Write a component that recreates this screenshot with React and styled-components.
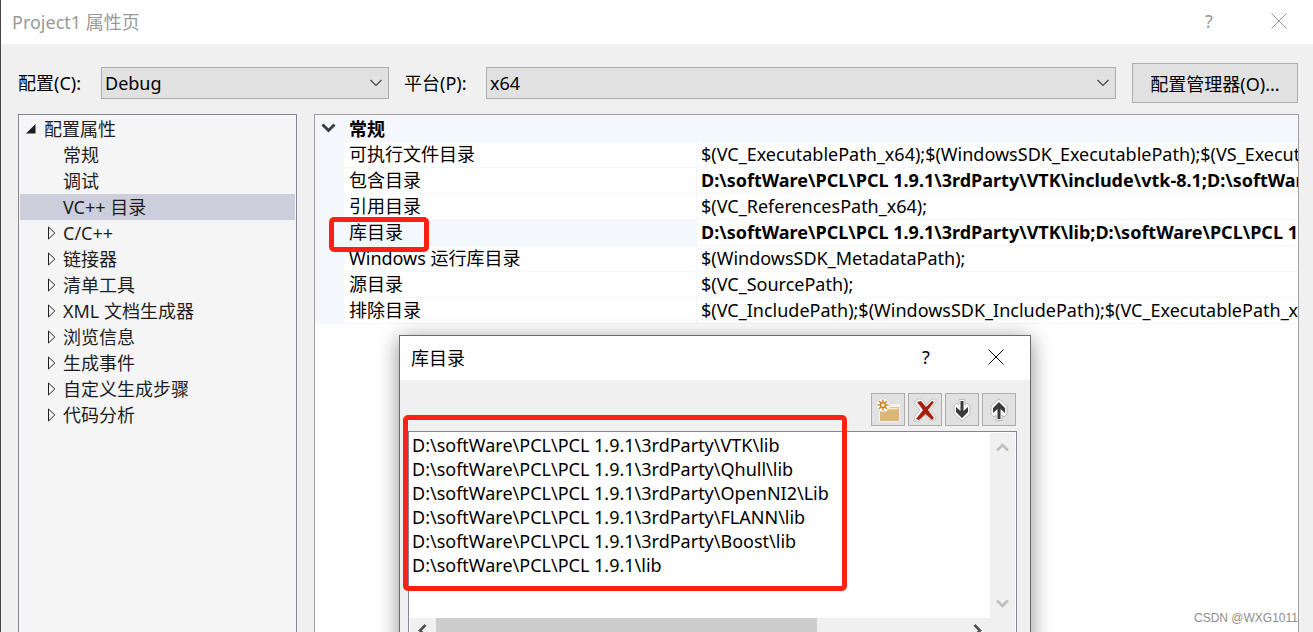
import React from 'react';
import styled, { createGlobalStyle } from 'styled-components';

const GlobalStyle = createGlobalStyle`
  * {
    box-sizing: border-box;
  }

  body {
    margin: 0;
    overflow: hidden;
    background: #f0f0f0;
    color: #000;
    font-family: 'Noto Sans', 'Noto Sans CJK SC', sans-serif;
    font-size: 18px;
  }

  button,
  select {
    font: inherit;
    color: inherit;
  }

  ul {
    margin: 0;
    padding: 0;
    list-style: none;
  }
`;

const Window = styled.div`
  position: relative;
  display: flex;
  flex-direction: column;
  height: 100vh;
  overflow: hidden;
  border-left: 1px solid #47484c;
`;

const TitleBar = styled.header`
  display: flex;
  flex: none;
  align-items: center;
  justify-content: space-between;
  height: 44px;
  padding: 0 11px 2px;
  background: #fff;
  color: ${({ $inactive }) => ($inactive ? '#999' : '#000')};
`;

const Title = styled.h1`
  margin: 0;
  font-size: 18px;
  font-weight: 400;
`;

const WindowButtons = styled.div`
  display: flex;
`;

const WindowButton = styled.button`
  display: flex;
  align-items: center;
  justify-content: center;
  width: 46px;
  height: 42px;
  margin-left: 24px;
  padding: 0;
  border: 0;
  background: none;
`;

const Toolbar = styled.div`
  display: flex;
  flex: none;
  align-items: center;
  height: 40px;
  margin: 19px 15px 11px 17px;
`;

const Label = styled.label`
  width: ${({ $width }) => $width}px;
  padding-bottom: 2px;
  white-space: nowrap;
`;

const SelectBox = styled.div`
  position: relative;
  flex: ${({ $width }) => ($width ? `0 0 ${$width}px` : '1')};
  margin-right: 15px;

  svg {
    position: absolute;
    top: 12px;
    right: 7px;
    pointer-events: none;
  }
`;

const Select = styled.select`
  display: block;
  width: 100%;
  height: 32px;
  padding: 0 3px;
  border: 1px solid #adadad;
  border-radius: 0;
  background: #e1e1e1;
  appearance: none;
`;

const PushButton = styled.button`
  width: 166px;
  height: 40px;
  margin-left: 1px;
  padding: 0;
  border: 1px solid #adadad;
  background: #e1e1e1;
  white-space: nowrap;
`;

const Panels = styled.main`
  display: flex;
  flex: 1;
  gap: 17px;
  min-height: 0;
  padding: 0 14px 0 17px;
`;

const Tree = styled.ul`
  flex: 0 0 279px;
  padding: 1px;
  border: 1px solid #828790;
  border-bottom: 0;
  background: #f5f5f5;
  color: #1e1e1e;
`;

const TreeItem = styled.li`
  display: flex;
  align-items: center;
  height: 26px;
  padding-left: ${({ $root }) => ($root ? 6 : 24)}px;
  background: ${({ $selected }) => ($selected ? '#cccedb' : 'none')};
  line-height: 26px;
`;

const Twisty = styled.span`
  display: flex;
  width: ${({ $root }) => ($root ? 18 : 19)}px;
  padding-left: ${({ $root }) => ($root ? 0 : 3)}px;
`;

const GridPanel = styled.section`
  flex: 1;
  min-width: 0;
  overflow: hidden;
  border: 1px solid #a0a0a0;
  border-bottom: 0;
  background: #fff;
`;

const Grid = styled.table`
  width: 100%;
  table-layout: fixed;
  border-spacing: 0;
  line-height: 25px;
  white-space: nowrap;
`;

const Gutter = styled.td`
  padding: 0;
  background: #f4f7fc;

  svg {
    display: block;
    margin: 0 0 2px 6px;
  }
`;

const GroupName = styled.th`
  height: 27px;
  padding: 2px 5px 0;
  background: #f4f7fc;
  text-align: left;
`;

const NameCell = styled.th`
  position: relative;
  height: 26px;
  padding: 0 5px;
  border-right: 1px solid #f4f7fc;
  border-bottom: 1px solid #f4f7fc;
  background: ${({ $selected }) => ($selected ? '#f4f7fc' : 'none')};
  font-weight: 400;
  text-align: left;
`;

const ValueCell = styled.td`
  padding: 0 0 0 4px;
  border-bottom: 1px solid #f4f7fc;
  font-weight: ${({ $modified }) => ($modified ? 700 : 400)};
  overflow: hidden;
`;

const Marker = styled.span`
  position: absolute;
  z-index: 1;
  top: ${({ $top }) => $top}px;
  left: ${({ $left }) => $left}px;
  width: ${({ $width }) => $width}px;
  height: ${({ $height }) => $height}px;
  border: 5px solid #ff2014;
  border-radius: 5px;
  pointer-events: none;
`;

const Dialog = styled.section`
  position: absolute;
  top: 335px;
  left: 398px;
  width: 632px;
  border: 1px solid #6b6b6b;
  background: #f0f0f0;
  box-shadow: 0 4px 20px rgba(0, 0, 0, 0.45);
`;

const DialogTools = styled.div`
  display: flex;
  justify-content: flex-end;
  gap: 3px;
  padding: 13px 14px 5px;
`;

const ToolButton = styled.button`
  display: flex;
  align-items: center;
  justify-content: center;
  width: 34px;
  height: 33px;
  padding: 0;
  border: 1px solid #adadad;
  background: #e1e1e1;
`;

const ListBox = styled.div`
  position: relative;
  display: grid;
  grid-template-columns: 1fr 25px;
  grid-template-rows: 185px 26px;
  margin: 0 13px 13px 8px;
  padding: 1px;
  border: 1px solid #828790;
  background: #fff;
`;

const PathList = styled.ul`
  line-height: 24px;
  white-space: nowrap;

  li {
    padding-left: 2px;
  }
`;

const VerticalScroll = styled.div`
  display: flex;
  flex-direction: column;
  align-items: center;
  justify-content: space-between;
  padding: 8px 0;
  background: #f0f0f0;
`;

const HorizontalScroll = styled.div`
  display: grid;
  grid-column: 1 / -1;
  grid-template-columns: 26px 381px 1fr 50px;
  background: #f0f0f0;

  svg {
    margin: 6px 6px 0;
  }
`;

const Thumb = styled.div`
  grid-column: 2;
  background: #cdcdcd;
`;

const ArrowEnd = styled.div`
  grid-column: 4;
`;

const Watermark = styled.span`
  position: absolute;
  right: 15px;
  bottom: 6px;
  color: #8e8e8e;
  font-family: 'Liberation Sans', sans-serif;
  font-size: 12px;
  line-height: 16px;
`;

const CloseIcon = () => (
  <svg width="16" height="16" viewBox="0 0 16 16" aria-hidden="true">
    <path d="M.5.5l15 15M15.5.5l-15 15" stroke="currentColor" fill="none" />
  </svg>
);

const SelectChevron = () => (
  <svg width="12" height="8" viewBox="0 0 12 8" aria-hidden="true">
    <path d="M.5 1l5.500 5.500L11.500 1" stroke="#444" strokeWidth="1.200" fill="none" />
  </svg>
);

const rotations = { up: 0, right: 90, down: 180, left: 270 };

const ScrollArrow = ({ to, color }) => (
  <svg width="13" height="13" viewBox="0 0 13 13" aria-hidden="true">
    <path
      d="M1 9.500L6.500 4L12 9.500"
      transform={`rotate(${rotations[to]} 6.500 6.500)`}
      stroke={color}
      strokeWidth="2.600"
      fill="none"
    />
  </svg>
);

const NewFolderIcon = () => (
  <svg width="26" height="26" viewBox="0 0 26 26" aria-hidden="true">
    <path d="M4 11V25h21V7h-9z" fill="#f6f3ec" />
    <path d="M5 14h7l4-4h8v14H5z" fill="#dcb679" />
    <path d="M14 11.500h9" stroke="#f5ead6" strokeWidth="1.500" />
    <circle cx="8" cy="8" r="7" fill="#f8f8f6" stroke="#c9c9c9" strokeWidth=".6" />
    <path
      d="M8 2.500v11M2.500 8h11M4 4l8 8M12 4l-8 8"
      stroke="#c98a2b"
      strokeWidth="1.500"
    />
    <circle cx="8" cy="8" r="3.200" fill="#c98a2b" />
    <circle cx="8" cy="8" r="1.500" fill="#fff" />
  </svg>
);

const DeleteIcon = () => (
  <svg width="26" height="26" viewBox="0 0 26 26" aria-hidden="true">
    <path
      d="M3 4l3-2h4l4 6 6-6h4v3l-6 8 6 7-1 3-4 1-6-6-6 6H2l1-5 5-6-5-6z"
      fill="#f8f8f8"
      stroke="#c2c2c2"
    />
    <path
      d="M5 5l4-1 5 6 6-6 2 1-6 8 6 8-2 2-6.500-6L7 23l-3-1 7-9z"
      fill="#a81e0c"
    />
  </svg>
);

const MoveIcon = ({ up }) => (
  <svg width="20" height="24" viewBox="0 0 20 24" aria-hidden="true">
    <g transform={up ? 'rotate(180 10 12)' : undefined}>
      <path
        d="M7 1.500h6V7l2-2 3 3v8l-8 7-8-7V8l3-3 2 2z"
        fill="#f8f8f8"
        stroke="#bdbdbd"
      />
      <path
        d="M8.500 3h3v10L16 9v5l-6 6-6-6V9l4.500 4z"
        fill="#3a3a3a"
      />
    </g>
  </svg>
);

const treeItems = [
  { name: '常规' },
  { name: '调试' },
  { name: 'VC++ 目录', selected: true },
  { name: 'C/C++', folder: true },
  { name: '链接器', folder: true },
  { name: '清单工具', folder: true },
  { name: 'XML 文档生成器', folder: true },
  { name: '浏览信息', folder: true },
  { name: '生成事件', folder: true },
  { name: '自定义生成步骤', folder: true },
  { name: '代码分析', folder: true },
];

const properties = [
  {
    name: '可执行文件目录',
    value:
      '$(VC_ExecutablePath_x64);$(WindowsSDK_ExecutablePath);$(VS_ExecutablePath)',
  },
  {
    name: '包含目录',
    value:
      'D:\\softWare\\PCL\\PCL 1.9.1\\3rdParty\\VTK\\include\\vtk-8.1;D:\\softWare\\PCL',
    modified: true,
  },
  { name: '引用目录', value: '$(VC_ReferencesPath_x64);' },
  {
    name: '库目录',
    value:
      'D:\\softWare\\PCL\\PCL 1.9.1\\3rdParty\\VTK\\lib;D:\\softWare\\PCL\\PCL 1.9.1',
    modified: true,
    selected: true,
  },
  { name: 'Windows 运行库目录', value: '$(WindowsSDK_MetadataPath);' },
  { name: '源目录', value: '$(VC_SourcePath);' },
  {
    name: '排除目录',
    value:
      '$(VC_IncludePath);$(WindowsSDK_IncludePath);$(VC_ExecutablePath_x64)',
  },
];

const libraryPaths = [
  'D:\\softWare\\PCL\\PCL 1.9.1\\3rdParty\\VTK\\lib',
  'D:\\softWare\\PCL\\PCL 1.9.1\\3rdParty\\Qhull\\lib',
  'D:\\softWare\\PCL\\PCL 1.9.1\\3rdParty\\OpenNI2\\Lib',
  'D:\\softWare\\PCL\\PCL 1.9.1\\3rdParty\\FLANN\\lib',
  'D:\\softWare\\PCL\\PCL 1.9.1\\3rdParty\\Boost\\lib',
  'D:\\softWare\\PCL\\PCL 1.9.1\\lib',
];

const Caption = ({ title, inactive }) => (
  <TitleBar $inactive={inactive}>
    <Title>{title}</Title>
    <WindowButtons>
      <WindowButton aria-label="帮助">?</WindowButton>
      <WindowButton aria-label="关闭">
        <CloseIcon />
      </WindowButton>
    </WindowButtons>
  </TitleBar>
);

const ConfigTree = () => (
  <Tree role="tree" aria-label="配置属性">
    <TreeItem $root role="treeitem" aria-expanded="true">
      <Twisty $root>
        <svg width="10" height="10" viewBox="0 0 10 10" aria-hidden="true">
          <path d="M9.500 0v9.500H0z" fill="#1e1e1e" />
        </svg>
      </Twisty>
      配置属性
    </TreeItem>
    {treeItems.map(({ name, folder, selected }) => (
      <TreeItem
        key={name}
        $selected={selected}
        role="treeitem"
        aria-selected={Boolean(selected)}
      >
        <Twisty>
          {folder && (
            <svg width="9" height="14" viewBox="0 0 9 14" aria-hidden="true">
              <path d="M1.500 1v12L7.800 7z" stroke="#1e1e1e" fill="#fff" />
            </svg>
          )}
        </Twisty>
        {name}
      </TreeItem>
    ))}
  </Tree>
);

const PropertyGrid = () => (
  <GridPanel>
    <Grid>
      <colgroup>
        <col width="29" />
        <col width="353" />
        <col />
      </colgroup>
      <tbody>
        <tr>
          <Gutter>
            <svg width="15" height="10" viewBox="0 0 15 10" aria-hidden="true">
              <path d="M1.500 1.500l6 6 6-6" stroke="#3a3d42" strokeWidth="3" fill="none" />
            </svg>
          </Gutter>
          <GroupName colSpan="2">常规</GroupName>
        </tr>
        {properties.map(({ name, value, modified, selected }) => (
          <tr key={name}>
            <Gutter />
            <NameCell scope="row" $selected={selected}>
              {name}
              {selected && (
                <Marker $top={-3} $left={-15} $width={100} $height={35} />
              )}
            </NameCell>
            <ValueCell $modified={modified}>{value}</ValueCell>
          </tr>
        ))}
      </tbody>
    </Grid>
  </GridPanel>
);

const DirectoryDialog = () => (
  <Dialog role="dialog" aria-label="库目录">
    <Caption title="库目录" />
    <DialogTools>
      <ToolButton aria-label="新行">
        <NewFolderIcon />
      </ToolButton>
      <ToolButton aria-label="删除">
        <DeleteIcon />
      </ToolButton>
      <ToolButton aria-label="下移">
        <MoveIcon />
      </ToolButton>
      <ToolButton aria-label="上移">
        <MoveIcon up />
      </ToolButton>
    </DialogTools>
    <ListBox>
      <PathList>
        {libraryPaths.map((path) => (
          <li key={path}>{path}</li>
        ))}
      </PathList>
      <VerticalScroll>
        <ScrollArrow to="up" color="#bfbfbf" />
        <ScrollArrow to="down" color="#bfbfbf" />
      </VerticalScroll>
      <HorizontalScroll>
        <ScrollArrow to="left" color="#505050" />
        <Thumb />
        <ArrowEnd>
          <ScrollArrow to="right" color="#505050" />
        </ArrowEnd>
      </HorizontalScroll>
      <Marker $top={-17} $left={-6} $width={444} $height={176} />
    </ListBox>
  </Dialog>
);

const App = () => (
  <Window>
    <GlobalStyle />
    <Caption title="Project1 属性页" inactive />
    <Toolbar>
      <Label htmlFor="configuration" $width={83}>
        配置(C):
      </Label>
      <SelectBox $width={288}>
        <Select id="configuration" defaultValue="Debug">
          <option>Debug</option>
          <option>Release</option>
        </Select>
        <SelectChevron />
      </SelectBox>
      <Label htmlFor="platform" $width={82}>
        平台(P):
      </Label>
      <SelectBox>
        <Select id="platform" defaultValue="x64">
          <option>x64</option>
          <option>Win32</option>
        </Select>
        <SelectChevron />
      </SelectBox>
      <PushButton>配置管理器(O)...</PushButton>
    </Toolbar>
    <Panels>
      <ConfigTree />
      <PropertyGrid />
    </Panels>
    <DirectoryDialog />
    <Watermark>CSDN @WXG1011</Watermark>
  </Window>
);

export default App;
